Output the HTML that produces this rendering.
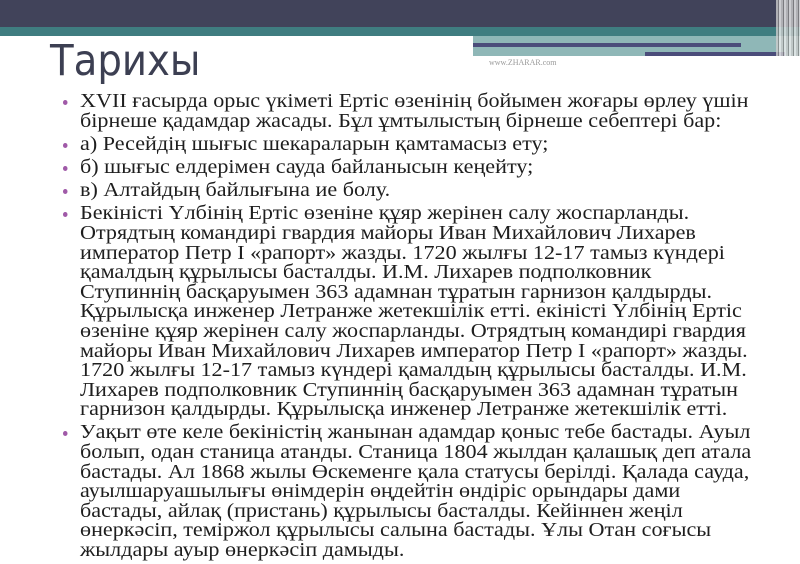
<!DOCTYPE html>
<html><head><meta charset="utf-8"><style>
body{margin:0;width:800px;height:563px;overflow:hidden;background:#fff;position:relative;font-family:"Liberation Serif",serif;}
.dark{position:absolute;left:0;top:0;width:800px;height:27px;background:#41435a;}
.teal{position:absolute;left:0;top:27px;width:800px;height:9px;background:#3f7d80;}
.right{position:absolute;left:473px;top:36px;width:327px;height:20px;background:#8fb7b7;}
.l1{position:absolute;left:473px;top:43px;width:268px;height:4px;background:#4b4d7a;}
.l2{position:absolute;left:645px;top:52px;width:140px;height:4px;background:#4b4d7a;}
.vs{position:absolute;left:776px;top:0;width:24px;height:56px;background:repeating-linear-gradient(90deg,#ccc 0 2px,#888 2px 3px,#eee 3px 5px);opacity:.8}
h1{position:absolute;left:50px;top:36px;margin:0;font:400 43px "DejaVu Sans Condensed","Liberation Sans Narrow",sans-serif;color:#3c3f52;}
.www{position:absolute;left:489px;top:58px;font-size:8px;color:#999;}
.t{position:absolute;left:80px;top:92px;font-size:19.5px;line-height:19.6px;color:#1e1e1e;white-space:nowrap;transform:scaleX(1.135);transform-origin:0 0;}
.t p{margin:0 0 3.6px 0;position:relative;}
.t p:before{content:"";position:absolute;left:-15px;top:8px;width:4px;height:5px;border-radius:50%;background:#a05aa8;}
</style></head><body>
<div class="dark"></div><div class="teal"></div><div class="right"></div><div class="l1"></div><div class="l2"></div><div class="vs"></div>
<h1>Тарихы</h1>
<div class="www">www.ZHARAR.com</div>
<div class="t">
<p>XVII ғасырда орыс үкіметі Ертіс өзенінің бойымен жоғары өрлеу үшін<br>бірнеше қадамдар жасады. Бұл ұмтылыстың бірнеше себептері бар:</p>
<p>а) Ресейдің шығыс шекараларын қамтамасыз ету;</p>
<p>б) шығыс елдерімен сауда байланысын кеңейту;</p>
<p>в) Алтайдың байлығына ие болу.</p>
<p>Бекіністі Үлбінің Ертіс өзеніне құяр жерінен салу жоспарланды.<br>Отрядтың командирі гвардия майоры Иван Михайлович Лихарев<br>император Петр I «рапорт» жазды. 1720 жылғы 12-17 тамыз күндері<br>қамалдың құрылысы басталды. И.М. Лихарев подполковник<br>Ступиннің басқаруымен 363 адамнан тұратын гарнизон қалдырды.<br>Құрылысқа инженер Летранже жетекшілік етті. екіністі Үлбінің Ертіс<br>өзеніне құяр жерінен салу жоспарланды. Отрядтың командирі гвардия<br>майоры Иван Михайлович Лихарев император Петр I «рапорт» жазды.<br>1720 жылғы 12-17 тамыз күндері қамалдың құрылысы басталды. И.М.<br>Лихарев подполковник Ступиннің басқаруымен 363 адамнан тұратын<br>гарнизон қалдырды. Құрылысқа инженер Летранже жетекшілік етті.</p>
<p>Уақыт өте келе бекіністің жанынан адамдар қоныс тебе бастады. Ауыл<br>болып, одан станица атанды. Станица 1804 жылдан қалашық деп атала<br>бастады. Ал 1868 жылы Өскеменге қала статусы берілді. Қалада сауда,<br>ауылшаруашылығы өнімдерін өңдейтін өндіріс орындары дами<br>бастады, айлақ (пристань) құрылысы басталды. Кейіннен жеңіл<br>өнеркәсіп, теміржол құрылысы салына бастады. Ұлы Отан соғысы<br>жылдары ауыр өнеркәсіп дамыды.</p>
</div>
</body></html>
